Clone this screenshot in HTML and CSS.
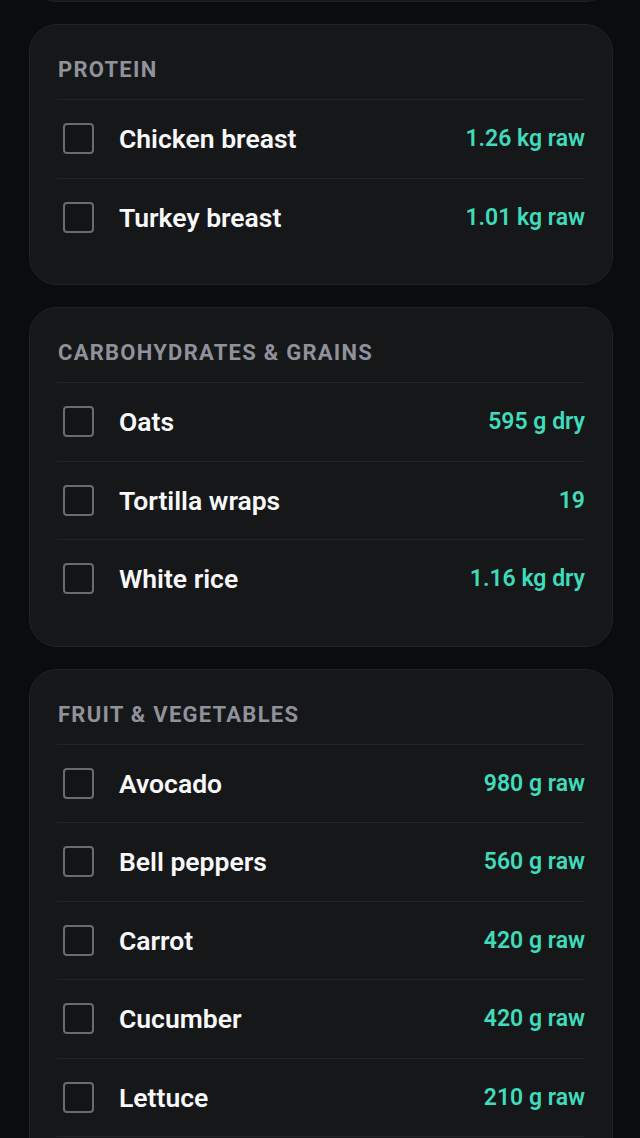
FILE: index.html
```html
<!DOCTYPE html>
<html lang="en">
<head>
<meta charset="utf-8">
<title>Shopping list</title>
<link rel="stylesheet" href="styles.css">
</head>
<body>
<main class="list">
  <div class="prev-clip"><div class="card prev-card"></div></div>

  <section class="card">
    <h2 class="card-title">PROTEIN</h2>
    <div class="row"><span class="box"></span><span class="name">Chicken breast</span><span class="qty">1.26 kg raw</span></div>
    <div class="row"><span class="box"></span><span class="name">Turkey breast</span><span class="qty">1.01 kg raw</span></div>
  </section>

  <section class="card">
    <h2 class="card-title">CARBOHYDRATES &amp; GRAINS</h2>
    <div class="row"><span class="box"></span><span class="name">Oats</span><span class="qty">595 g dry</span></div>
    <div class="row"><span class="box"></span><span class="name">Tortilla wraps</span><span class="qty">19</span></div>
    <div class="row"><span class="box"></span><span class="name">White rice</span><span class="qty">1.16 kg dry</span></div>
  </section>

  <section class="card card-open">
    <h2 class="card-title">FRUIT &amp; VEGETABLES</h2>
    <div class="row"><span class="box"></span><span class="name">Avocado</span><span class="qty">980 g raw</span></div>
    <div class="row"><span class="box"></span><span class="name">Bell peppers</span><span class="qty">560 g raw</span></div>
    <div class="row"><span class="box"></span><span class="name">Carrot</span><span class="qty">420 g raw</span></div>
    <div class="row"><span class="box"></span><span class="name">Cucumber</span><span class="qty">420 g raw</span></div>
    <div class="row"><span class="box"></span><span class="name">Lettuce</span><span class="qty">210 g raw</span></div>
    <div class="divider"></div>
  </section>
</main>
</body>
</html>
```

FILE: styles.css
```css
* { box-sizing: border-box; }

html, body {
  margin: 0;
  padding: 0;
  background: #0b0c0e;
  height: 1138px;
  overflow: hidden;
}

body {
  font-family: Roboto, "Noto Sans", "Liberation Sans", sans-serif;
  color: #f3f4f6;
}

.list {
  display: flex;
  flex-direction: column;
  gap: 22px;
  padding-left: 29px;
  width: 613px;
}

.prev-clip {
  height: 2px;
  overflow: hidden;
  display: flex;
  flex-direction: column;
  justify-content: flex-end;
}

.prev-card {
  flex: none;
  height: 60px;
}

.card {
  background: #161719;
  border: 1px solid #222326;
  border-radius: 28px;
  padding: 30px 27px 28px;
}

.card-open {
  padding-bottom: 60px;
}

.card-title {
  margin: 0;
  padding: 0 0 14px 1px;
  font-size: 22px;
  line-height: 30px;
  font-weight: 700;
  letter-spacing: 1.25px;
  color: #8f929b;
}

.row {
  display: flex;
  align-items: center;
  height: 78.5px;
  border-top: 1px solid #232427;
}

.divider {
  border-top: 1px solid #232427;
}

.box {
  flex: none;
  width: 31px;
  height: 31px;
  margin-left: 6px;
  border: 2.5px solid #6a6b70;
  border-radius: 4px;
  background: #131416;
}

.name {
  flex: 1;
  margin-left: 25px;
  font-size: 26.5px;
  font-weight: 600;
  color: #f8f8f9;
}

.qty {
  flex: none;
  font-size: 23px;
  font-weight: 600;
  color: #3fdbba;
}
```
